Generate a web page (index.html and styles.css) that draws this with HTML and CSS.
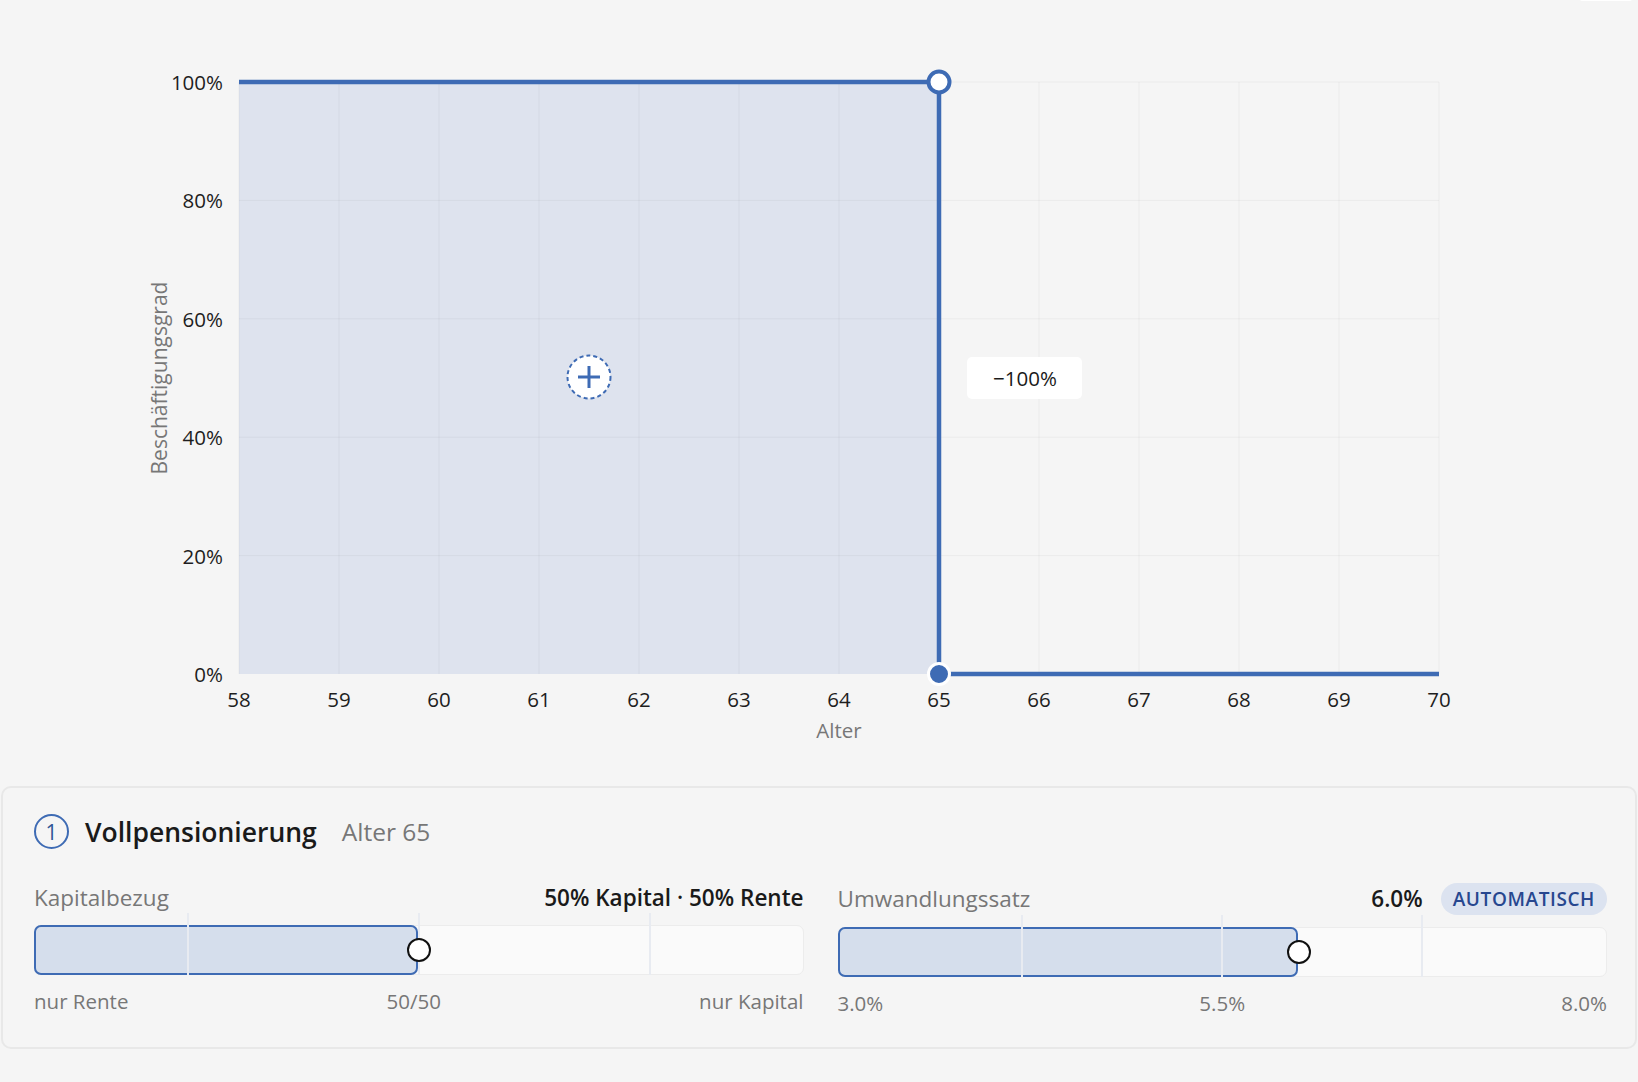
FILE: index.html
```html
<!DOCTYPE html>
<html lang="de">
<head>
    <meta charset="UTF-8">
    <meta name="viewport" content="width=device-width, initial-scale=1.0">
    <title>Pensionierungsplan</title>
    <link rel="stylesheet" href="styles.css">
</head>
<body>
    <div class="page">
        <!-- Diagramm: Beschäftigungsgrad nach Alter -->
        <div class="chart">
            <svg width="1638" height="786" viewBox="0 0 1638 786">
                <rect class="sliver" x="1580" y="-4" width="52" height="5" rx="2"></rect>

                <rect class="area" x="239" y="82" width="700" height="592"></rect>

                <g class="grid">
                    <line x1="239" y1="82" x2="239" y2="674"></line>
                    <line x1="339" y1="82" x2="339" y2="674"></line>
                    <line x1="439" y1="82" x2="439" y2="674"></line>
                    <line x1="539" y1="82" x2="539" y2="674"></line>
                    <line x1="639" y1="82" x2="639" y2="674"></line>
                    <line x1="739" y1="82" x2="739" y2="674"></line>
                    <line x1="839" y1="82" x2="839" y2="674"></line>
                    <line x1="939" y1="82" x2="939" y2="674"></line>
                    <line x1="1039" y1="82" x2="1039" y2="674"></line>
                    <line x1="1139" y1="82" x2="1139" y2="674"></line>
                    <line x1="1239" y1="82" x2="1239" y2="674"></line>
                    <line x1="1339" y1="82" x2="1339" y2="674"></line>
                    <line x1="1439" y1="82" x2="1439" y2="674"></line>
                    <line x1="239" y1="82" x2="1439" y2="82"></line>
                    <line x1="239" y1="200.4" x2="1439" y2="200.4"></line>
                    <line x1="239" y1="318.8" x2="1439" y2="318.8"></line>
                    <line x1="239" y1="437.2" x2="1439" y2="437.2"></line>
                    <line x1="239" y1="555.6" x2="1439" y2="555.6"></line>
                </g>

                <g class="y-labels">
                    <text x="223" y="82">100%</text>
                    <text x="223" y="200.4">80%</text>
                    <text x="223" y="318.8">60%</text>
                    <text x="223" y="437.2">40%</text>
                    <text x="223" y="555.6">20%</text>
                    <text x="223" y="674">0%</text>
                </g>

                <g class="x-labels">
                    <text x="239" y="699">58</text>
                    <text x="339" y="699">59</text>
                    <text x="439" y="699">60</text>
                    <text x="539" y="699">61</text>
                    <text x="639" y="699">62</text>
                    <text x="739" y="699">63</text>
                    <text x="839" y="699">64</text>
                    <text x="939" y="699">65</text>
                    <text x="1039" y="699">66</text>
                    <text x="1139" y="699">67</text>
                    <text x="1239" y="699">68</text>
                    <text x="1339" y="699">69</text>
                    <text x="1439" y="699">70</text>
                </g>

                <text class="axis-title" x="839" y="730">Alter</text>
                <text class="axis-title axis-title-y" x="159" y="378" transform="rotate(-90 159 378)">Beschäftigungsgrad</text>

                <path class="step" d="M239 82 H939 V674 H1439"></path>
                <circle class="point-open" cx="939" cy="82" r="10.5"></circle>
                <circle class="point-fill" cx="939" cy="674" r="10.5"></circle>

                <!-- Schritt hinzufügen -->
                <g class="add">
                    <circle cx="589" cy="377" r="21.5"></circle>
                    <line x1="578" y1="377" x2="600" y2="377"></line>
                    <line x1="589" y1="366" x2="589" y2="388"></line>
                </g>

                <g class="delta">
                    <rect x="967" y="357" width="115" height="42" rx="5"></rect>
                    <text x="1025" y="378">−100%</text>
                </g>
            </svg>
        </div>

        <section class="card">
            <div class="card-header">
                <span class="step-number">1</span>
                <h2>Vollpensionierung</h2>
                <span class="step-age">Alter 65</span>
            </div>

            <div class="controls">
                <div class="control">
                    <div class="control-top">
                        <span class="control-label">Kapitalbezug</span>
                        <span class="control-value">50% Kapital · 50% Rente</span>
                    </div>
                    <div class="slider">
                        <div class="track">
                            <div class="fill" style="width: 50%"></div>
                        </div>
                        <span class="tick" style="left: 20%"></span>
                        <span class="tick" style="left: 50%"></span>
                        <span class="tick" style="left: 80%"></span>
                        <span class="knob" style="left: 50%"></span>
                    </div>
                    <div class="control-scale">
                        <span>nur Rente</span>
                        <span>50/50</span>
                        <span>nur Kapital</span>
                    </div>
                </div>

                <div class="control">
                    <div class="control-top">
                        <span class="control-label">Umwandlungssatz</span>
                        <div class="control-right">
                            <span class="control-value">6.0%</span>
                            <span class="pill">AUTOMATISCH</span>
                        </div>
                    </div>
                    <div class="slider">
                        <div class="track">
                            <div class="fill" style="width: 60%"></div>
                        </div>
                        <span class="tick" style="left: 24%"></span>
                        <span class="tick" style="left: 50%"></span>
                        <span class="tick" style="left: 76%"></span>
                        <span class="knob" style="left: 60%"></span>
                    </div>
                    <div class="control-scale">
                        <span>3.0%</span>
                        <span>5.5%</span>
                        <span>8.0%</span>
                    </div>
                </div>
            </div>
        </section>
    </div>
</body>
</html>
```

FILE: styles.css
```css
body {
    margin: 0;
    background-color: #f5f5f5;
    font-family: 'Open Sans', 'Noto Sans', sans-serif;
    color: #1a1a1a;
}

.page {
    width: 1638px;
}

.chart svg {
    display: block;
}

/* Diagramm */
.sliver {
    fill: #ffffff;
}

.area {
    fill: #dee3ee;
}

.grid line {
    stroke: rgba(0, 0, 0, 0.045);
    stroke-width: 1;
}

.y-labels text,
.x-labels text {
    font-size: 20.5px;
    fill: #1e1e1e;
    dominant-baseline: central;
}

.y-labels text {
    text-anchor: end;
}

.x-labels text {
    text-anchor: middle;
}

.axis-title {
    font-size: 20.5px;
    fill: #777;
    text-anchor: middle;
    dominant-baseline: central;
}

.axis-title-y {
    font-size: 21px;
}

.step {
    fill: none;
    stroke: #3e6bb4;
    stroke-width: 4.5;
}

.point-open {
    fill: #ffffff;
    stroke: #3e6bb4;
    stroke-width: 4;
}

.point-fill {
    fill: #3e6bb4;
    stroke: #ffffff;
    stroke-width: 3;
}

.add circle {
    fill: #ffffff;
    stroke: #3e6bb4;
    stroke-width: 2;
    stroke-dasharray: 4 3;
}

.add line {
    stroke: #3e6bb4;
    stroke-width: 3;
}

.delta rect {
    fill: #ffffff;
}

.delta text {
    font-size: 20.5px;
    font-weight: 500;
    fill: #1a1a1a;
    text-anchor: middle;
    dominant-baseline: central;
}

/* Karte */
.card {
    margin: 0 1px;
    border: 2px solid #e8e8e8;
    border-radius: 10px;
    padding: 26px 28px 30px 31px;
}

.card-header {
    display: flex;
    align-items: center;
    height: 35px;
}

.step-number {
    width: 31px;
    height: 31px;
    border: 2px solid #3e6bb4;
    border-radius: 50%;
    display: flex;
    align-items: center;
    justify-content: center;
    color: #2f5597;
    font-size: 21px;
}

.card-header h2 {
    margin: 0 0 0 16px;
    font-size: 26.5px;
    font-weight: 600;
}

.step-age {
    margin-left: 25px;
    font-size: 24.5px;
    color: #777;
}

.controls {
    display: grid;
    grid-template-columns: 1fr 1fr;
    column-gap: 34px;
    margin-top: 34px;
}

.control-top {
    display: flex;
    justify-content: space-between;
    align-items: center;
    min-height: 30px;
}

.control-label {
    font-size: 22.5px;
    line-height: 30px;
    color: #777;
}

.control-value {
    font-size: 22.5px;
    line-height: 30px;
    font-weight: 600;
}

.control-right {
    display: flex;
    align-items: center;
    gap: 18px;
}

.pill {
    height: 32px;
    padding: 0 12px;
    border-radius: 16px;
    background-color: #dce3f0;
    color: #27478f;
    font-size: 19px;
    font-weight: 600;
    letter-spacing: 0.6px;
    display: flex;
    align-items: center;
}

.slider {
    position: relative;
    padding-top: 12px;
}

.track {
    position: relative;
    height: 50px;
    box-sizing: border-box;
    background-color: #fafafa;
    border: 1px solid #ececec;
    border-radius: 7px;
}

.fill {
    position: absolute;
    left: -1px;
    top: -1px;
    bottom: -1px;
    box-sizing: border-box;
    background-color: #d5deec;
    border: 2px solid #3e6bb4;
    border-radius: 7px;
}

.tick {
    position: absolute;
    top: 0;
    bottom: 0;
    width: 2px;
    margin-left: -1px;
    background-color: #e8ebf1;
}

.knob {
    position: absolute;
    top: 37px;
    width: 20px;
    height: 20px;
    border: 2px solid #111;
    border-radius: 50%;
    background-color: #ffffff;
    transform: translate(-50%, -50%);
}

.control-scale {
    display: flex;
    justify-content: space-between;
    margin-top: 12px;
    font-size: 20.5px;
    line-height: 28px;
    color: #777;
}
```
